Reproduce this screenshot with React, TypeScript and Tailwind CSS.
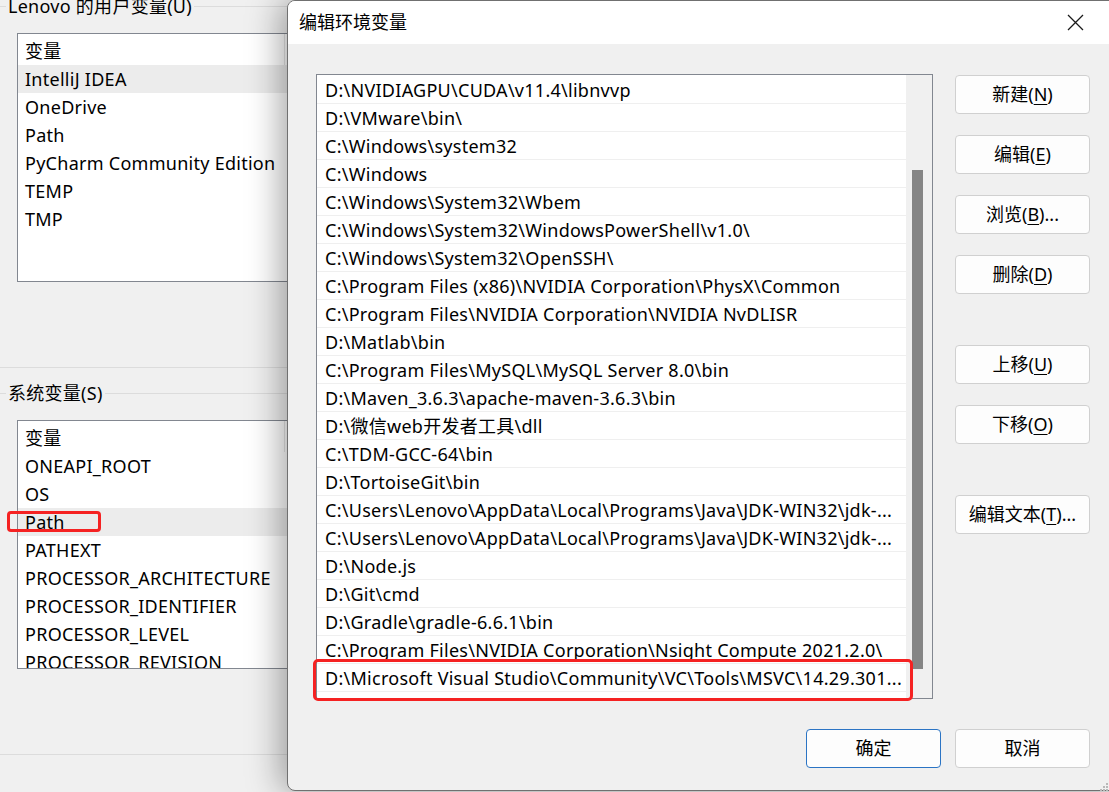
import React from 'react'

const userVars = ['IntelliJ IDEA', 'OneDrive', 'Path', 'PyCharm Community Edition', 'TEMP', 'TMP']

const sysVars = [
  'ONEAPI_ROOT',
  'OS',
  'Path',
  'PATHEXT',
  'PROCESSOR_ARCHITECTURE',
  'PROCESSOR_IDENTIFIER',
  'PROCESSOR_LEVEL',
  'PROCESSOR_REVISION',
]

const paths = [
  'D:\\NVIDIAGPU\\CUDA\\v11.4\\libnvvp',
  'D:\\VMware\\bin\\',
  'C:\\Windows\\system32',
  'C:\\Windows',
  'C:\\Windows\\System32\\Wbem',
  'C:\\Windows\\System32\\WindowsPowerShell\\v1.0\\',
  'C:\\Windows\\System32\\OpenSSH\\',
  'C:\\Program Files (x86)\\NVIDIA Corporation\\PhysX\\Common',
  'C:\\Program Files\\NVIDIA Corporation\\NVIDIA NvDLISR',
  'D:\\Matlab\\bin',
  'C:\\Program Files\\MySQL\\MySQL Server 8.0\\bin',
  'D:\\Maven_3.6.3\\apache-maven-3.6.3\\bin',
  'D:\\微信web开发者工具\\dll',
  'C:\\TDM-GCC-64\\bin',
  'D:\\TortoiseGit\\bin',
  'C:\\Users\\Lenovo\\AppData\\Local\\Programs\\Java\\JDK-WIN32\\jdk-...',
  'C:\\Users\\Lenovo\\AppData\\Local\\Programs\\Java\\JDK-WIN32\\jdk-...',
  'D:\\Node.js',
  'D:\\Git\\cmd',
  'D:\\Gradle\\gradle-6.6.1\\bin',
  'C:\\Program Files\\NVIDIA Corporation\\Nsight Compute 2021.2.0\\',
  'D:\\Microsoft Visual Studio\\Community\\VC\\Tools\\MSVC\\14.29.301...',
]

function GroupHeader({ label }: { label: React.ReactNode }) {
  return (
    <div className="flex h-5 items-center">
      <div className="h-px w-[6px] bg-[#dcdcdc]" />
      <span className="px-0.5 whitespace-nowrap">{label}</span>
      <div className="h-px flex-1 bg-[#dcdcdc]" />
    </div>
  )
}

function VarList({ items, selected }: { items: string[]; selected: number }) {
  return (
    <div className="ml-[17px] mt-[17px] h-[249px] w-[300px] overflow-hidden border border-[#828790] bg-white">
      <div className="flex h-[31px] items-center">
        <div className="h-full w-[267px] border-r border-[#e5e5e5] pl-[7px] pt-[2px] leading-[31px]">变量</div>
      </div>
      {items.map((v, i) => (
        <div
          key={v}
          className={`h-[28px] pl-[7px] leading-[28px] whitespace-nowrap ${i === selected ? 'bg-[#ececec]' : ''}`}
        >
          {v}
        </div>
      ))}
    </div>
  )
}

function Btn({ text, k, tail, primary }: { text: string; k: string; tail?: string; primary?: boolean }) {
  return (
    <button
      className={`h-[39px] w-[135px] shrink-0 rounded-[4px] border bg-[#fdfdfd] text-[18px] tracking-normal text-black ${
        primary ? 'border-[#2b74c4]' : 'border-[#d0d0d0]'
      }`}
    >
      {text}
      {k && (
        <>
          (<span className="underline underline-offset-[3px]">{k}</span>)
        </>
      )}
      {tail}
    </button>
  )
}

export default function App() {
  return (
    <div className="relative h-[792px] w-[1109px] overflow-hidden bg-[#f0f0f0] font-['Noto_Sans','Noto_Sans_CJK_SC',sans-serif] text-[18px] tracking-[0.27px] text-black">
      {/* background window: system properties */}
      <div className="-mt-[4px] flex w-[300px] flex-col">
        <GroupHeader label={<>Lenovo 的用户变量(U)</>} />
        <VarList items={userVars} selected={0} />
        <div className="mt-[85px] h-px bg-[#dcdcdc]" />
        <div className="mt-[15px]">
          <GroupHeader label="系统变量(S)" />
        </div>
        <VarList items={sysVars} selected={2} />
        <div className="mt-[85px] h-px bg-[#dcdcdc]" />
      </div>

      {/* red mark on Path */}
      <div className="absolute left-[7px] top-[511px] h-[21px] w-[94px] rounded-[4px] border-[3px] border-[#f52222]" />

      {/* dialog */}
      <div className="absolute left-[287px] top-0 flex h-[791px] w-[840px] flex-col overflow-hidden rounded-[8px] border border-[#707070] bg-[#f0f0f0] shadow-[-6px_0_34px_rgba(0,0,0,0.36)]">
        <div className="flex h-[43px] shrink-0 items-center bg-white pl-[11px]">
          <span className="text-[18px] tracking-normal">编辑环境变量</span>
          <svg className="ml-auto mr-[42px]" width="17" height="17" viewBox="0 0 17 17">
            <path d="M1 1L16 16M16 1L1 16" stroke="#1a1a1a" strokeWidth="1.3" />
          </svg>
        </div>

        <div className="flex pl-[28px] pt-[30px]">
          <div className="relative flex h-[625px] w-[617px] border border-[#828790] bg-white">
            <div className="flex flex-1 flex-col overflow-hidden pt-px">
              {paths.map((p, i) => (
                <div
                  key={i}
                  className="h-[28px] shrink-0 overflow-hidden whitespace-nowrap border-b border-[#efefef] pl-[8px] leading-[28px]"
                >
                  {p}
                </div>
              ))}
            </div>
            <div className="w-[26px] shrink-0 bg-[#f0f0f0] pl-[6px] pt-[95px]">
              <div className="h-[499px] w-[11px] bg-[#858585]" />
            </div>
          </div>

          <div className="ml-[22px] flex flex-col pt-px">
            <Btn text="新建" k="N" />
            <div className="mt-[21px]">
              <Btn text="编辑" k="E" />
            </div>
            <div className="mt-[21px]">
              <Btn text="浏览" k="B" tail="..." />
            </div>
            <div className="mt-[21px]">
              <Btn text="删除" k="D" />
            </div>
            <div className="mt-[51px]">
              <Btn text="上移" k="U" />
            </div>
            <div className="mt-[21px]">
              <Btn text="下移" k="O" />
            </div>
            <div className="mt-[51px]">
              <Btn text="编辑文本" k="T" tail="..." />
            </div>
          </div>
        </div>

        <div className="flex gap-[14px] pl-[518px] pt-[30px]">
          <Btn text="确定" k="" primary />
          <Btn text="取消" k="" />
        </div>
      </div>

      {/* red mark on last path row */}
      <div className="absolute left-[313px] top-[659px] h-[42px] w-[600px] rounded-[5px] border-[3px] border-[#f52222]" />

      {/* resize grip */}
      <svg className="absolute left-[1099px] top-[782px]" width="10" height="10" viewBox="0 0 10 10">
        <rect x="7" y="1" width="2" height="2" fill="#b8b8b8" />
        <rect x="4" y="4" width="2" height="2" fill="#b8b8b8" />
        <rect x="7" y="4" width="2" height="2" fill="#b8b8b8" />
        <rect x="1" y="7" width="2" height="2" fill="#b8b8b8" />
        <rect x="4" y="7" width="2" height="2" fill="#b8b8b8" />
        <rect x="7" y="7" width="2" height="2" fill="#b8b8b8" />
      </svg>
    </div>
  )
}
